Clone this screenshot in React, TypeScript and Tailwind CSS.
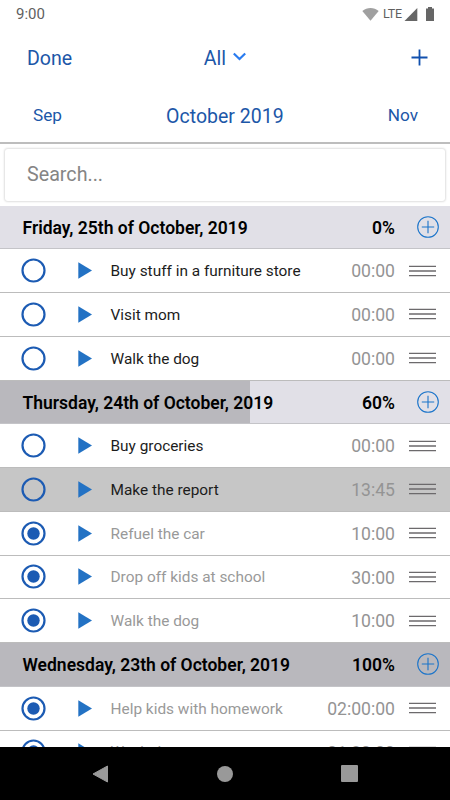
import clsx from 'clsx';

type Task = { title: string; time: string; done?: boolean; active?: boolean };
type Day = { label: string; percent: number; fill: number; tasks: Task[] };

const days: Day[] = [
    {
        label: 'Friday, 25th of October, 2019',
        percent: 0,
        fill: 0,
        tasks: [
            { title: 'Buy stuff in a furniture store', time: '00:00' },
            { title: 'Visit mom', time: '00:00' },
            { title: 'Walk the dog', time: '00:00' },
        ],
    },
    {
        label: 'Thursday, 24th of October, 2019',
        percent: 60,
        fill: 55.6,
        tasks: [
            { title: 'Buy groceries', time: '00:00' },
            { title: 'Make the report', time: '13:45', active: true },
            { title: 'Refuel the car', time: '10:00', done: true },
            { title: 'Drop off kids at school', time: '30:00', done: true },
            { title: 'Walk the dog', time: '10:00', done: true },
        ],
    },
    {
        label: 'Wednesday, 23th of October, 2019',
        percent: 100,
        fill: 100,
        tasks: [
            { title: 'Help kids with homework', time: '02:00:00', done: true },
            { title: 'Wash dog', time: '01:30:00', done: true },
        ],
    },
];

const StatusBar = () => (
    <div className="flex h-7 shrink-0 items-center justify-between px-4 text-[#5f5f5f]">
        <span className="text-[15px]">9:00</span>
        <div className="flex items-center">
            <svg width="17" height="13" viewBox="0 0 17 13">
                <path d="M0.3 3 C5 -0.9 12 -0.9 16.7 3 L8.5 12.8 Z" fill="#a0a0a0" />
            </svg>
            <span className="ml-1 w-[19px] text-[12.5px] tracking-tight">LTE</span>
            <svg className="ml-0.5" width="14" height="13" viewBox="0 0 14 13">
                <path d="M0.5 13 L13.3 0 V13 Z" fill="#666" />
            </svg>
            <svg className="-mr-px ml-[7px] -mt-px" width="10" height="14" viewBox="0 0 10 14">
                <path d="M3 0 H7 V1.5 H9 V14 H1 V1.5 H3 Z" fill="#666" />
            </svg>
        </div>
    </div>
);

const DayHeader = ({ day }: { day: Day }) => (
    <div className="relative flex h-[43.75px] items-center border-b border-[#c4c4c8] bg-[#e1e0e7] pl-[22.5px] pr-[11.5px] font-semibold text-black">
        <div className="absolute inset-y-0 left-0 bg-[#b9b8bd]" style={{ width: `${day.fill}%` }} />
        <span className="relative flex-1 whitespace-nowrap pt-0.5 text-[17.5px]">{day.label}</span>
        <span className="relative pt-0.5 text-[17.5px]">{day.percent}%</span>
        <svg className="relative ml-[21.5px]" width="22" height="22" viewBox="0 0 22 22" fill="none" stroke="#1b74ca" strokeWidth="1.1">
            <circle cx="11" cy="11" r="10.3" />
            <path d="M4.8 11 H17.2 M11 4.8 V17.2" />
        </svg>
    </div>
);

const TaskRow = ({ task }: { task: Task }) => (
    <div className={clsx('flex h-[43.75px] items-center border-b border-[#bcbcbc] pl-[21px] pr-[14px]', task.active ? 'bg-[#c6c6c6]' : 'bg-white')}>
        <svg width="25" height="25" viewBox="0 0 25 25">
            <circle cx="12.5" cy="12.5" r="11" fill="none" stroke="#1c5bb3" strokeWidth="2.2" />
            {task.done && <circle cx="12.5" cy="12.5" r="6.2" fill="#1c5bb3" />}
        </svg>
        <svg className="ml-8" width="14" height="17" viewBox="0 0 14 17">
            <path d="M0.3 0.3 L14 8.5 L0.3 16.7 Z" fill="#2372c4" />
        </svg>
        <span className={clsx('ml-[18.5px] flex-1 whitespace-nowrap pt-0.5 text-[15.4px]', task.done ? 'text-[#999]' : 'text-[#1c1c1c]')}>{task.title}</span>
        <span className="pt-0.5 text-[17.6px] text-[#949494]">{task.time}</span>
        <svg className="ml-3.5" width="27" height="12" viewBox="0 0 27 12" stroke="#6c6a6c" strokeWidth="1.3">
            <path d="M0 1.3 H27 M0 6 H27 M0 10.7 H27" />
        </svg>
    </div>
);

const NavBar = () => (
    <div className="flex h-[53px] shrink-0 items-center justify-center gap-[108px] bg-black pr-px">
        <svg width="17" height="18" viewBox="0 0 17 18">
            <path d="M15.5 1 V17 L1 9 Z" fill="#999" stroke="#999" strokeLinejoin="round" />
        </svg>
        <div className="size-4 rounded-full bg-[#999]" />
        <div className="size-[17px] rounded-[1px] bg-[#999]" />
    </div>
);

const App = () => (
    <div className="flex h-[800px] w-[450px] flex-col overflow-hidden bg-white font-['Roboto',sans-serif]">
        <StatusBar />
        {/* Toolbar */}
        <div className="grid h-[60px] shrink-0 grid-cols-3 items-center px-[22px] pt-px text-[19.6px] text-[#1c57a8]">
            <button className="pl-[5px] text-left">Done</button>
            <button className="flex items-center justify-center gap-[7px]">
                All
                <svg className="-mt-[3px]" width="13" height="9" viewBox="0 0 13 9" fill="none" stroke="#2a7cf0" strokeWidth="2.2">
                    <path d="M0.8 1.5 L6.5 7 L12.2 1.5" />
                </svg>
            </button>
            <button className="flex justify-end">
                <svg className="-mt-[3px]" width="17" height="17" viewBox="0 0 17 17" stroke="#1150ae" strokeWidth="1.8">
                    <path d="M0.5 8.5 H16.5 M8.5 0.5 V16.5" />
                </svg>
            </button>
        </div>
        {/* Month switcher */}
        <div className="flex h-[55.5px] shrink-0 items-center justify-between border-b-2 border-[#bdbdbd] pl-[33px] pr-8 pt-[3px] text-[17.2px] text-[#1c57a8]">
            <span>Sep</span>
            <span className="text-[19.5px]">October 2019</span>
            <span>Nov</span>
        </div>
        <div className="shrink-0 px-[5px] pb-[5px] pt-[5px]">
            <input
                type="search"
                placeholder="Search..."
                className="block h-[52px] w-full rounded-[3px] bg-white px-[22px] text-[19.7px] shadow-[0_0_2px_1px_rgba(0,0,0,0.13)] placeholder:text-[#858585]"
            />
        </div>
        <div className="min-h-0 flex-1 overflow-hidden">
            {days.map((day) => (
                <div key={day.label}>
                    <DayHeader day={day} />
                    {day.tasks.map((task) => <TaskRow key={task.title} task={task} />)}
                </div>
            ))}
        </div>
        <NavBar />
    </div>
);

export default App;
